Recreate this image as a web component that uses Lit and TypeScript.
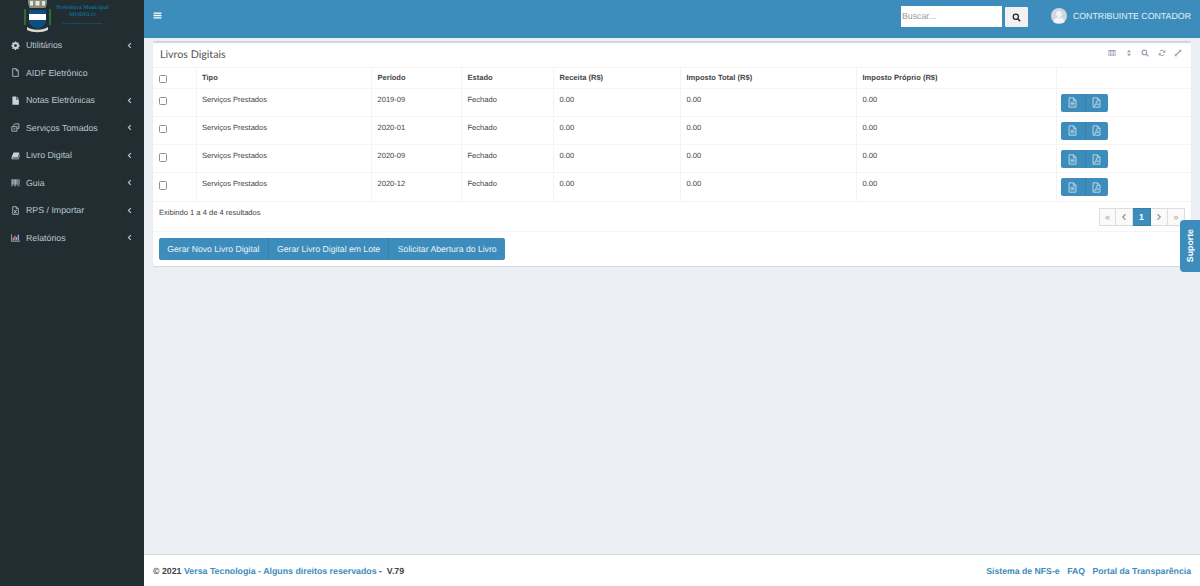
import { css, html, LitElement, svg } from "lit";
import { customElement } from "lit/decorators.js";

const icons = {
  gear: svg`<path fill-rule="evenodd" d="M6.800 1h2.400l.4 1.800 1.200.5 1.600-1 1.700 1.700-1 1.600.5 1.200 1.800.4v2.400l-1.800.4-.5 1.200 1 1.600-1.700 1.700-1.600-1-1.200.5-.4 1.800H6.800l-.4-1.800-1.200-.5-1.600 1-1.700-1.700 1-1.600-.5-1.200L.6 9.400V7l1.800-.4.5-1.200-1-1.600 1.700-1.700 1.600 1 1.200-.5zM8 5.600a2.600 2.600 0 1 0 0 5.200 2.600 2.600 0 0 0 0-5.200z"/>`,
  fileO: svg`<path fill="none" stroke="currentColor" stroke-width="1.400" d="M3 1.200h6.500L13 4.700v10.100H3zM9.300 1.400v3.500h3.500"/>`,
  file: svg`<path d="M2.500 1H9v5h5v9.500H2.500zM10 1l4 4h-4z"/>`,
  tomados: svg`<path fill="none" stroke="currentColor" stroke-width="1.400" d="M1.500 6.500h9v8h-9zM5 6.500V4.500a3 3 0 0 1 3-3h6v8h-3.500M4 10.500h4"/>`,
  book: svg`<path d="M4.500 2.500H15l-2.500 9H3.200c-.8 0-1.200.5-1 1.100.2.500.6.700 1.200.700h9.800l2-7.300.8.500-2.200 8H3.200C1.600 14.500.5 13.400.7 11.800z"/>`,
  barcode: svg`<path d="M1 2h2v10H1zm3 0h1v10H4zm2 0h2.500v10H6zm3.500 0h1v10h-1zm2 0h1v10h-1zm2 0H15v10h-1.500zM1 13h2v1.500H1zm5 0h2.500v1.500H6zm5.500 0h1v1.500h-1zm2 0H15v1.500h-1.500z"/>`,
  fileX: svg`<path fill="none" stroke="currentColor" stroke-width="1.300" d="M3 1.200h6.500L13 4.700v10.100H3zM9.300 1.400v3.500h3.500"/><path fill="none" stroke="currentColor" stroke-width="1.500" d="M5.500 7l4.500 6M10 7l-4.500 6"/>`,
  chart: svg`<path d="M.5 2h1.200v11.800H16V15H.5z"/><path fill="#b39ddb" d="M3 8h2v5H3z"/><path fill="#ef9a9a" d="M6 5h2v8H6z"/><path fill="#b39ddb" d="M9 7h2v6H9z"/><path fill="#90caf9" d="M12 3h2v10h-2z"/>`,
  angle: svg`<path fill="none" stroke="currentColor" stroke-width="2.600" d="M11 2.500 5.500 8l5.500 5.500"/>`,
  angleR: svg`<path fill="none" stroke="currentColor" stroke-width="2.600" d="M5 2.500 10.500 8 5 13.500"/>`,
  bars: svg`<path d="M1 2.500h14v2.400H1zm0 4.300h14v2.400H1zm0 4.300h14v2.400H1z"/>`,
  search: svg`<circle cx="6.800" cy="6.800" r="4.600" fill="none" stroke="currentColor" stroke-width="2.200"/><path fill="none" stroke="currentColor" stroke-width="2.600" d="m10.200 10.200 4.300 4.300"/>`,
  grid: svg`<path fill-rule="evenodd" d="M1 2h14v12H1zm1 3v2.500h3V5zm4 0v2.500h4V5zm5 0v2.500h3V5zM2 8.500V11h3V8.500zm4 0V11h4V8.500zm5 0V11h3V8.500zM2 12v1h3v-1zm4 0v1h4v-1zm5 0v1h3v-1z"/>`,
  sort: svg`<path d="M8 1.500 12 6.500H4zM8 14.500 4 9.500h8z"/>`,
  refresh: svg`<path fill="none" stroke="currentColor" stroke-width="2" d="M13 6.500A5.400 5.400 0 0 0 3.500 5M3 9.500A5.400 5.400 0 0 0 12.500 11"/><path d="M14.500 2v5.500H9zM1.500 14V8.500H7z"/>`,
  expand: svg`<path d="M9.500 1.500H14.500V6.500L12.800 4.800 4.800 12.800 6.500 14.500H1.500V9.500L3.200 11.200 11.200 3.200z"/>`,
  doc: svg`<path fill="none" stroke="currentColor" stroke-width="1.200" d="M3 1.200h6.500L13 4.700v10.100H3zM9.300 1.400v3.500h3.500"/><path fill="none" stroke="currentColor" stroke-width="1" d="M5 7.500h6M5 9.500h6M5 11.500h6"/>`,
  pdf: svg`<path fill="none" stroke="currentColor" stroke-width="1.200" d="M3 1.200h6.500L13 4.700v10.100H3zM9.300 1.400v3.500h3.500"/><path fill="none" stroke="currentColor" stroke-width="1" d="M4.500 13c2-1 3.500-4 3.200-6.500-.1-.8.900-.8.800 0-.2 2 1.500 4 3 4.300-2-.3-5 .5-7 2.200z"/>`,
};

const menu = [
  { icon: icons.gear, label: "Utilitários", arrow: true },
  { icon: icons.fileO, label: "AIDF Eletrônico", arrow: false },
  { icon: icons.file, label: "Notas Eletrônicas", arrow: true },
  { icon: icons.tomados, label: "Serviços Tomados", arrow: true },
  { icon: icons.book, label: "Livro Digital", arrow: true },
  { icon: icons.barcode, label: "Guia", arrow: true },
  { icon: icons.fileX, label: "RPS / Importar", arrow: true },
  { icon: icons.chart, label: "Relatórios", arrow: true },
];

const rows = ["2019-09", "2020-01", "2020-09", "2020-12"];

const icon = (content: unknown, cls = "") =>
  html`<svg class="icon ${cls}" viewBox="0 0 16 16" fill="currentColor">${content}</svg>`;

@customElement("app-root")
export class AppRoot extends LitElement {
  static override styles = css`
    :host {
      display: flex;
      height: 100vh;
      overflow: hidden;
      position: relative;
      background: #ecf0f5;
      font-family: "Liberation Sans", Arial, sans-serif;
      text-rendering: geometricPrecision;
      color: #333;
    }
    .icon {
      display: block;
      width: 10px;
      height: 10px;
      flex: none;
    }
    .sidebar {
      width: 144px;
      flex: none;
      background: #222d32;
      color: #b8c7ce;
    }
    .logo {
      height: 35px;
      display: flex;
      overflow: hidden;
      padding-left: 23px;
      gap: 4px;
    }
    .crest {
      width: 29px;
      height: 33px;
      flex: none;
    }
    .logo-text {
      width: 53px;
      padding-top: 5px;
      text-align: center;
      color: #0b6d93;
      font-family: "Liberation Serif", serif;
      font-weight: 700;
      font-size: 5.800px;
      line-height: 7px;
      white-space: nowrap;
    }
    .logo-text small {
      display: block;
      font-size: 2.400px;
      line-height: 5px;
      margin-top: 1.500px;
    }
    .menu {
      margin-top: -3.750px;
    }
    .item {
      height: 27.500px;
      display: flex;
      align-items: center;
      padding: 0 10px 0 10.500px;
      font-size: 8.800px;
      color: #b8c7ce;
    }
    .item .icon {
      width: 9px;
      height: 9px;
      margin-right: 6.500px;
      color: #c6d2d8;
    }
    .item span {
      flex: 1;
    }
    .item .chev {
      width: 7px;
      height: 7px;
      margin: 0 1.500px 0 0;
      color: #b8c7ce;
    }
    .main {
      flex: 1;
      min-width: 0;
      display: flex;
      flex-direction: column;
    }
    .topbar {
      height: 38px;
      flex: none;
      background: #3c8dbc;
      color: #fff;
      display: flex;
      align-items: center;
      padding: 0 9px;
    }
    .topbar > .icon {
      width: 9px;
      height: 9px;
      margin-bottom: 7px;
    }
    .search {
      margin-left: auto;
      display: flex;
      align-items: flex-end;
      gap: 3px;
      margin-bottom: 4.500px;
    }
    .search .field {
      width: 101px;
      height: 21px;
      box-sizing: border-box;
      background: #fff;
      color: #9b9b9b;
      font-size: 8.800px;
      line-height: 21px;
      padding-left: 1px;
    }
    .search .go {
      width: 23px;
      height: 20px;
      background: #f1f1f1;
      color: #222;
      border-radius: 1px;
      display: flex;
      align-items: center;
      justify-content: center;
    }
    .search .go .icon {
      width: 9px;
      height: 9px;
    }
    .user {
      display: flex;
      align-items: center;
      gap: 6px;
      margin-left: 23px;
      margin-bottom: 6px;
      font-size: 8.800px;
      color: #e6f0f6;
    }
    .avatar {
      width: 16px;
      height: 16px;
      border-radius: 50%;
      background: #d2d6de;
    }
    .content {
      flex: 1;
      padding: 3px 9px 0;
    }
    .box {
      background: #fff;
      border-top: 2px solid #d2d6de;
      border-radius: 2px;
      box-shadow: 0 1px 1px rgba(0, 0, 0, 0.1);
    }
    .box-head {
      height: 23.500px;
      display: flex;
      align-items: center;
      padding: 0 9px 0 7px;
    }
    .box-head h3 {
      margin: 0;
      font-family: Lato, sans-serif;
      font-weight: 400;
      font-size: 10.700px;
      color: #555;
    }
    .tools {
      margin-left: auto;
      display: flex;
      gap: 8.500px;
      color: #97a0b3;
      margin-bottom: 3px;
    }
    .tools .icon {
      width: 8px;
      height: 8px;
    }
    table {
      width: 100%;
      border-collapse: collapse;
      table-layout: fixed;
      font-size: 7.550px;
      color: #444;
    }
    th,
    td {
      border: 1px solid #f4f4f4;
      border-left: none;
      text-align: left;
      vertical-align: top;
      padding: 6px 5px 0 5.500px;
      box-sizing: border-box;
    }
    tr > :last-child {
      border-right: none;
      padding-left: 4.500px;
    }
    th {
      height: 21px;
      padding-top: 5px;
      font-weight: 700;
    }
    td {
      height: 28.300px;
    }
    .check {
      display: block;
      box-sizing: border-box;
      width: 8.500px;
      height: 8.500px;
      border: 1px solid #8f8f8f;
      border-radius: 1.500px;
      margin: 2px 0 0 0;
      background: #fff;
    }
    .actions {
      display: inline-flex;
      margin-top: -1px;
      border-radius: 2px;
      overflow: hidden;
    }
    .actions div {
      width: 23.500px;
      box-sizing: border-box;
      height: 18px;
      background: #3c8dbc;
      color: #d5e6f1;
      display: flex;
      align-items: center;
      justify-content: center;
    }
    .actions div + div {
      border-left: 1px solid #367fa9;
    }
    .actions .icon {
      width: 11px;
      height: 11px;
    }
    .summary {
      height: 29.500px;
      box-sizing: border-box;
      display: flex;
      justify-content: space-between;
      padding: 6px 6px 0;
      font-size: 7.550px;
      color: #444;
    }
    .pager {
      display: flex;
      height: 18px;
    }
    .pager div {
      width: 17px;
      box-sizing: border-box;
      border: 1px solid #ddd;
      border-left: none;
      background: #fafafa;
      color: #999;
      display: flex;
      align-items: center;
      justify-content: center;
      font-size: 8.800px;
    }
    .pager div:first-child {
      border-left: 1px solid #ddd;
    }
    .pager .icon {
      width: 8px;
      height: 8px;
    }
    .pager .on {
      background: #3c8dbc;
      border-color: #367fa9;
      color: #fff;
      font-weight: 700;
      width: 18px;
    }
    .box-foot {
      border-top: 1px solid #f4f4f4;
      padding: 6px;
      display: flex;
    }
    .group {
      display: flex;
      border-radius: 2px;
      overflow: hidden;
    }
    .group div {
      height: 22px;
      line-height: 22px;
      padding: 0 8.350px;
      background: #3c8dbc;
      color: #e9f2f8;
      font-size: 8.650px;
    }
    .group div + div {
      border-left: 1px solid #367fa9;
    }
    .footer {
      height: 32px;
      flex: none;
      box-sizing: border-box;
      border-top: 1px solid #d2d6de;
      background: #fff;
      display: flex;
      align-items: center;
      justify-content: space-between;
      padding: 0 9px;
      font-size: 8.700px;
      font-weight: 700;
      color: #444;
    }
    .footer a {
      color: #3c8dbc;
    }
    .footer .copy {
      font-size: 8.800px;
    }
    .footer .links {
      display: flex;
      gap: 7.500px;
    }
    .support {
      position: absolute;
      right: 0;
      top: 220px;
      width: 20px;
      height: 52px;
      background: #3c8dbc;
      color: #fff;
      border-radius: 4px 0 0 4px;
      display: flex;
      align-items: center;
      justify-content: center;
      font-size: 8.800px;
      font-weight: 700;
    }
    .support span {
      writing-mode: vertical-rl;
      transform: rotate(180deg);
    }
  `;

  private renderCrest() {
    return html`<svg class="crest" viewBox="0 0 29 33">
      <path fill="#8a8a7a" d="M5 0h19v3l-1.500 5h-16L5 3z" />
      <path fill="#e8e8e0" d="M7 1h3v4.500H7zm5.500 0h4v4.500h-4zm6.500 0h3v4.500h-3z" />
      <path fill="#2c6a3a" d="M1 9h2v16H1zM26 9h2v16h-2z" />
      <path fill="#0c4f80" d="M6 10h17v11c0 4-4 6-8.500 8C10 27 6 25 6 21z" />
      <path fill="#fff" d="M6 14h17v6H6z" />
      <path fill="#d8d8d0" d="M4 27c6 3.500 15 3.500 21 0v3c-6 3-15 3-21 0z" />
    </svg>`;
  }

  override render() {
    return html`
      <aside class="sidebar">
        <div class="logo">
          ${this.renderCrest()}
          <div class="logo-text">
            Prefeitura Municipal<br />MODELO
            <small>Lorem ipsum dolor sit amet consectetur</small>
          </div>
        </div>
        <nav class="menu">
          ${menu.map(
            (m) => html`<div class="item">
              ${icon(m.icon)}<span>${m.label}</span>
              ${m.arrow ? icon(icons.angle, "chev") : ""}
            </div>`,
          )}
        </nav>
      </aside>
      <div class="main">
        <header class="topbar">
          ${icon(icons.bars)}
          <div class="search">
            <div class="field">Buscar...</div>
            <div class="go">${icon(icons.search)}</div>
          </div>
          <div class="user">
            <svg class="avatar" viewBox="0 0 16 16">
              <circle cx="8" cy="6" r="3" fill="#f3f3f3" />
              <path fill="#f3f3f3" d="M2.500 15c0-4 2-5.500 5.500-5.500s5.500 1.500 5.500 5.500z" />
            </svg>
            CONTRIBUINTE CONTADOR
          </div>
        </header>
        <main class="content">
          <section class="box">
            <div class="box-head">
              <h3>Livros Digitais</h3>
              <div class="tools">
                ${icon(icons.grid)}${icon(icons.sort)}${icon(icons.search)}${icon(icons.refresh)}${icon(icons.expand)}
              </div>
            </div>
            <table>
              <colgroup>
                <col style="width:43px" />
                <col style="width:175.500px" />
                <col style="width:90px" />
                <col style="width:92px" />
                <col style="width:127px" />
                <col style="width:176px" />
                <col style="width:199.500px" />
                <col />
              </colgroup>
              <thead>
                <tr>
                  <th><i class="check"></i></th>
                  <th>Tipo</th>
                  <th>Período</th>
                  <th>Estado</th>
                  <th>Receita (R$)</th>
                  <th>Imposto Total (R$)</th>
                  <th>Imposto Próprio (R$)</th>
                  <th></th>
                </tr>
              </thead>
              <tbody>
                ${rows.map(
                  (r) => html`<tr>
                    <td><i class="check"></i></td>
                    <td>Serviços Prestados</td>
                    <td>${r}</td>
                    <td>Fechado</td>
                    <td>0.00</td>
                    <td>0.00</td>
                    <td>0.00</td>
                    <td>
                      <div class="actions">
                        <div>${icon(icons.doc)}</div>
                        <div>${icon(icons.pdf)}</div>
                      </div>
                    </td>
                  </tr>`,
                )}
              </tbody>
            </table>
            <div class="summary">
              <span>Exibindo 1 a 4 de 4 resultados</span>
              <div class="pager">
                <div>«</div>
                <div>${icon(icons.angle)}</div>
                <div class="on">1</div>
                <div>${icon(icons.angleR)}</div>
                <div>»</div>
              </div>
            </div>
            <div class="box-foot">
              <div class="group">
                <div>Gerar Novo Livro Digital</div>
                <div>Gerar Livro Digital em Lote</div>
                <div>Solicitar Abertura do Livro</div>
              </div>
            </div>
          </section>
        </main>
        <footer class="footer">
          <div class="copy">© 2021 <a>Versa Tecnologia - Alguns direitos reservados</a> - &nbsp;V.79</div>
          <div class="links">
            <a>Sistema de NFS-e</a><a>FAQ</a><a>Portal da Transparência</a>
          </div>
        </footer>
      </div>
      <div class="support"><span>Suporte</span></div>
    `;
  }
}
